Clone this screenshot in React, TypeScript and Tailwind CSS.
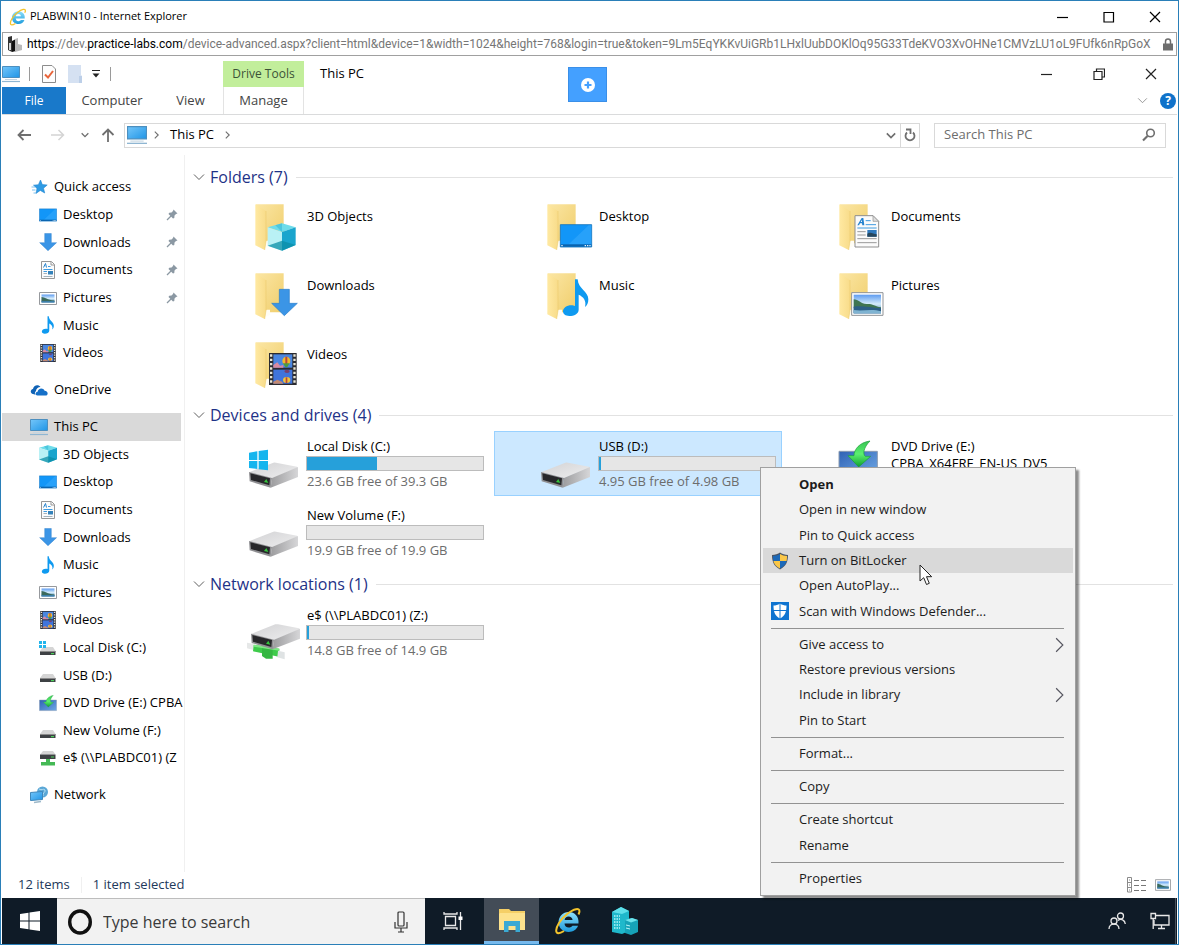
import React from 'react';
import clsx from 'clsx';

interface IconProps {
  className?: string;
}

/* Shared gradients, referenced by every drawing on the page */
const Gradients = () => (
  <svg width="0" height="0" className="absolute" aria-hidden="true">
    <defs>
      <linearGradient id="folderBack" x1="0" y1="0" x2="1" y2="1">
        <stop offset="0" stopColor="#fbe6a4" />
        <stop offset="1" stopColor="#f0ce6c" />
      </linearGradient>
      <linearGradient id="folderFlap" x1="0" y1="0" x2="1" y2="0">
        <stop offset="0" stopColor="#ffe9a2" />
        <stop offset="1" stopColor="#f8dc8a" />
      </linearGradient>
      <linearGradient id="diskTop" x1="0" y1="0" x2="1" y2="1">
        <stop offset="0" stopColor="#d2d2d4" />
        <stop offset="1" stopColor="#eeeeef" />
      </linearGradient>
      <linearGradient id="diskSide" x1="0" y1="0" x2="1" y2="0">
        <stop offset="0" stopColor="#9c9c9e" />
        <stop offset="1" stopColor="#d6d6d8" />
      </linearGradient>
      <linearGradient id="screen" x1="0" y1="0" x2="1" y2="1">
        <stop offset="0" stopColor="#74c6fa" />
        <stop offset="1" stopColor="#1f95e6" />
      </linearGradient>
      <linearGradient id="dvd" x1="0" y1="0" x2="1" y2="1">
        <stop offset="0" stopColor="#2f62b4" />
        <stop offset="1" stopColor="#6ea8e6" />
      </linearGradient>
      <linearGradient id="sky" x1="0" y1="0" x2="0" y2="1">
        <stop offset="0" stopColor="#5d9bf0" />
        <stop offset="0.5" stopColor="#d5ecfb" />
        <stop offset="1" stopColor="#3a7bb0" />
      </linearGradient>
      <linearGradient id="greenArrow" x1="0" y1="0" x2="0" y2="1">
        <stop offset="0" stopColor="#35c552" />
        <stop offset="0.5" stopColor="#5cf070" />
        <stop offset="1" stopColor="#0f9f2f" />
      </linearGradient>
      <linearGradient id="ie" x1="0" y1="0" x2="0" y2="1">
        <stop offset="0" stopColor="#8fe0fb" />
        <stop offset="1" stopColor="#1d9bdc" />
      </linearGradient>
    </defs>
  </svg>
);

/* Shapes share one 180 x 195 tile canvas */
const Folder = () => (
  <g>
    <path d="M42 34H125V151H42Z" fill="url(#folderBack)" />
    <path d="M66 152L74 143H84V158L70 166Z" fill="#fffdf5" />
    <path d="M40 34L72 54V146L68 171L40 157Z" fill="url(#folderFlap)" />
    <path d="M72 54V146L68 171" fill="none" stroke="#e8c664" strokeWidth="1.5" />
  </g>
);

const Cube = () => (
  <g>
    <path d="M120 91L161 103L120 117L77 103Z" fill="#6edcea" />
    <path d="M77 103L120 117V173L77 158Z" fill="#b9f1f5" />
    <path d="M120 117L161 103V156L120 173Z" fill="#1aa5cd" />
    <path d="M77 158L120 143L161 156L120 173Z" fill="#0b8da5" fillOpacity="0.75" />
    <path d="M100 97L120 117V91Z" fill="#37b9d6" fillOpacity="0.6" />
  </g>
);

const DownArrow = () => (
  <path
    d="M112 82H142V124H166L127 161L89 124H112Z"
    fill="#3b95e6"
    stroke="#2b7fcc"
    strokeWidth="2"
  />
);

const Film = () => (
  <g>
    <path d="M81 66H164V162H81Z" fill="#2b2b30" />
    <path d="M94 70H151V110H94Z" fill="#4a86e0" />
    <path d="M94 116H151V158H94Z" fill="#3f74dc" />
    <path d="M94 102L106 94L114 104L124 102V110H94Z" fill="#d98aa0" />
    <path d="M94 152L106 146L120 152L124 158H94Z" fill="#c48a72" />
    <ellipse cx="133" cy="90" rx="12" ry="13" fill="#f0b92c" />
    <path d="M130 77H136V103H130Z" fill="#b8453a" />
    <path d="M123 97H143L136 108H130Z" fill="#4b9c40" />
    <ellipse cx="135" cy="121" rx="8" ry="5" fill="#77406e" />
    <ellipse cx="134" cy="147" rx="11" ry="9" fill="#eec441" />
    <path d="M131 139H136V156H131Z" fill="#b8453a" />
    <path
      d="M87.500 70V160M157.500 70V160"
      stroke="#e9e6d6"
      strokeWidth="7"
      strokeDasharray="7 6"
    />
  </g>
);

const DesktopShape = () => (
  <g>
    <path d="M79 95H173V162H79Z" fill="#1296f8" stroke="#1873b9" strokeWidth="2.500" />
    <path d="M104 154L164 97H172V154Z" fill="#35a8fb" fillOpacity="0.6" />
    <path d="M80 154H172V161H80Z" fill="#0b63ad" />
    <path d="M82 156H86V160H82ZM152 156H156V160H152ZM159 156H163V160H159ZM166 156H170V160H166Z" fill="#e8f5ff" />
  </g>
);

const Note = () => (
  <path
    d="M123 52H131C133 82 163 88 163 112C163 124 159 131 153 135C158 116 148 104 134 98V143C134 155 120 162 106 162C94 162 87 156 87 148C87 138 98 130 112 130C117 130 120 131 123 132Z"
    fill="#0f9af0"
  />
);

const DocumentShape = () => (
  <g>
    <path d="M87 68H141L158 85V162H87Z" fill="#fbfbfb" stroke="#8f8f8f" strokeWidth="3" />
    <path d="M141 68V85H158Z" fill="#dedede" stroke="#8f8f8f" strokeWidth="2" />
    <path d="M94 97L107 75H112L115 97H109L108 91H102L99 97ZM104 87H108V81Z" fill="#2583cf" />
    <path d="M119 83H134M119 95H150M94 105H152" stroke="#3f9be0" strokeWidth="3" />
    <path d="M94 116H119M94 126H119M94 137H152M94 149H152" stroke="#9a9a9a" strokeWidth="3" />
    <path d="M124 111H152V131H124Z" fill="#2f79bd" />
    <path d="M124 122C134 115 142 124 152 124V131H124Z" fill="#27465c" />
  </g>
);

const PictureShape = () => (
  <g>
    <path d="M77 92H171V160H77Z" fill="#ffffff" stroke="#8f9296" strokeWidth="3" />
    <path d="M83 98H165V154H83Z" fill="url(#sky)" />
    <path d="M83 112C98 112 104 126 122 126C136 124 146 132 165 136V139H83Z" fill="#3f7551" />
    <path d="M83 134C110 130 135 138 165 138V154H83Z" fill="#2c5f86" />
    <path d="M83 144C110 148 140 140 165 148V154H83Z" fill="#7fb3d1" />
  </g>
);

const SmallPicture = () => (
  <g>
    <path d="M0.500 3.500H17.500V15.500H0.500Z" fill="#fff" stroke="#96999d" />
    <path d="M2.500 5.500H15.500V13.500H2.500Z" fill="url(#sky)" />
    <path d="M2.500 8C6 8 8 11 15.500 11.500V12.500H2.500Z" fill="#3b6a5c" />
    <path d="M2.500 12H15.500V13.500H2.500Z" fill="#3d7fa8" />
  </g>
);

const SmallDocument = () => (
  <g>
    <path d="M2.500 0.500H12.500L15.500 3.500V17.500H2.500Z" fill="#fcfcfc" stroke="#979797" />
    <path d="M12 1V4H15.500" fill="none" stroke="#979797" />
    <path d="M4.500 6.500L6.500 2.500L7.500 6.500" fill="none" stroke="#2583cf" />
    <path d="M9 5.500H11.500M4.500 8.500H13.500M4.500 10.500H8" stroke="#3f9be0" />
    <path d="M4.500 12.500H8M4.500 15.500H13.500" stroke="#a5b3bd" />
    <path d="M9 10H14V13.500H9Z" fill="#3482ba" />
  </g>
);

const Disk = () => (
  <g>
    <path d="M21 124L94 95Q98 94 102 95L165 107Q168 109 165 111L90 142Z" fill="url(#diskTop)" />
    <path d="M90 141L168 108V138L86 170Z" fill="url(#diskSide)" />
    <path d="M21 123L90 141L86 170L23 151Z" fill="#8f8f92" />
    <path d="M25 127L84 142L82 163L27 147Z" fill="#27272a" />
    <path d="M66 153L73 144L79 156Z" fill="#35c33c" />
  </g>
);

const WindowsFlag = () => (
  <path
    d="M21 65L46 61V87H21ZM50 60L78 56V87H50ZM21 90H46V114L21 111ZM50 90H78V118L50 115Z"
    fill="#16b5ee"
  />
);

const Dvd = () => (
  <g>
    <path d="M39 61H154V132H39Z" fill="url(#dvd)" stroke="#8b9bb0" strokeWidth="3" />
    <path d="M132 30C112 50 110 70 118 76H134L98 108L66 74H84C84 56 100 34 132 30Z" fill="url(#greenArrow)" stroke="#1d9c3a" strokeWidth="2" />
  </g>
);

const Cable = () => (
  <g>
    <path d="M15 128L34 131V150L15 145Z" fill="#e6e8e8" />
    <path d="M35 134L112 146L110 170L33 154Z" fill="#3ecb4b" />
    <path d="M60 140L92 146V176H72L60 168Z" fill="#35b742" />
    <path d="M35 134L112 146V152L35 140Z" fill="#7fe886" />
    <path d="M108 152L128 157V178L106 172Z" fill="#dfe3e4" />
  </g>
);

const TILE_ART: Record<string, React.ReactNode> = {
  cube: <><Folder /><Cube /></>,
  desktop: <><Folder /><DesktopShape /></>,
  documents: <><Folder /><DocumentShape /></>,
  downloads: <><Folder /><DownArrow /></>,
  music: <><Folder /><Note /></>,
  pictures: <><Folder /><PictureShape /></>,
  videos: <><Folder /><Film /></>,
  system: <><Disk /><WindowsFlag /></>,
  disk: <Disk />,
  dvd: <Dvd />,
  share: <><Cable /><g transform="translate(6 -22)"><Disk /></g></>,
};

const TileIcon = ({ art }: { art: string }) => (
  <svg viewBox="0 0 180 195" className="h-[65px] w-[60px] shrink-0" aria-hidden="true">
    {TILE_ART[art]}
  </svg>
);

const Monitor = ({ className }: IconProps) => (
  <svg viewBox="0 0 18 18" className={className} aria-hidden="true">
    <path d="M0.500 1.500H17.500V12.500H0.500Z" fill="url(#screen)" stroke="#4c8fbf" />
    <path d="M3 14.500H15" stroke="#c5d6e2" />
    <path d="M0 16.500H18" stroke="#8fb6d2" strokeWidth="1.200" />
  </svg>
);

const SmallDisk = () => (
  <g>
    <path d="M4 8H14L16.500 12H1Z" fill="#d5d5d5" />
    <path d="M1 12H16.500V16H1Z" fill="#3e4144" />
    <path d="M1 12H16.500V13H1Z" fill="#8b8b8b" />
    <path d="M12 14H15V15.200H12Z" fill="#4bd05a" />
  </g>
);

const NAV_ART: Record<string, { box: string; art: React.ReactNode }> = {
  star: {
    box: '0 0 18 18',
    art: (
      <>
        <path d="M10.500 2L12.300 6.600L17.200 7L13.500 10.200L14.700 15L10.300 12.400L6 15.400L7 10.400L3.500 7.200L8.400 6.700Z" fill="#2f9be4" stroke="#2287d2" strokeWidth="0.600" />
        <path d="M1.500 9H5M2 12H5.500M3.500 15H6" stroke="#7dc0ee" />
      </>
    ),
  },
  cloud: {
    box: '0 0 18 18',
    art: (
      <>
        <path d="M3 13C0 12.500 0 8.500 3 8C3.500 4 8.500 3 10.500 6C8 6 6 8 6 10C4.500 11 4.600 13 5.600 13.800Z" fill="#0f62b5" />
        <path d="M7.500 14.600C4.800 14.500 5 11 7.600 10.800C8 7 13.200 6 14.600 9.800C18.500 10 18.500 14.600 15.500 14.600Z" fill="#1570c8" />
      </>
    ),
  },
  network: {
    box: '0 0 18 18',
    art: (
      <>
        <circle cx="12.500" cy="6" r="5.500" fill="#5aa7d6" />
        <path d="M9 3C12 5 13 2 15 4C16 6 12 7 13 10" stroke="#b7dff2" fill="none" />
        <path d="M0.500 6.500L12.500 5.500V13.500L0.500 14.500Z" fill="url(#screen)" stroke="#3f87ba" />
        <path d="M4 16.500L11 15.500" stroke="#9db8c9" strokeWidth="1.500" />
      </>
    ),
  },
  cube: { box: '77 91 84 82', art: <Cube /> },
  desktop: { box: '77 93 98 71', art: <DesktopShape /> },
  downloads: { box: '86 80 82 82', art: <DownArrow /> },
  documents: { box: '0 0 18 18', art: <SmallDocument /> },
  pictures: { box: '0 0 18 18', art: <SmallPicture /> },
  music: { box: '87 50 78 114', art: <Note /> },
  videos: { box: '81 66 83 96', art: <Film /> },
  system: {
    box: '0 0 18 18',
    art: (
      <>
        <SmallDisk />
        <path d="M0 2H3V5H0ZM4 2H7V5H4ZM0 6H3V9H0ZM4 6H7V9H4Z" fill="#22b5ec" />
      </>
    ),
  },
  disk: { box: '0 0 18 18', art: <SmallDisk /> },
  dvd: { box: '36 28 121 106', art: <Dvd /> },
  share: {
    box: '0 0 18 18',
    art: (
      <>
        <path d="M4 2H14L16.500 5.500H1Z" fill="#d5d5d5" />
        <path d="M1 5.500H16.500V10H1Z" fill="#3e4144" />
        <path d="M12 7.500H15V8.500H12Z" fill="#4bd05a" />
        <path d="M7 10H11V13H16V16.500H2V13H7Z" fill="#44b955" />
      </>
    ),
  },
};

const NavIcon = ({ icon }: { icon: string }) =>
  icon === 'pc' ? (
    <Monitor className="size-[18px] shrink-0" />
  ) : (
    <svg viewBox={NAV_ART[icon].box} className="size-[18px] shrink-0" aria-hidden="true">
      {NAV_ART[icon].art}
    </svg>
  );

const Pin = () => (
  <svg viewBox="0 0 12 12" className="size-3 shrink-0" aria-hidden="true">
    <path d="M7.500 0.500L11.500 4.500L10 5L8.500 6.500L8.300 9L7 9.500L2.500 5L3.200 3.800L5.500 3.600L7 2Z" fill="#8b98a3" />
    <path d="M5 7L1 11" stroke="#8b98a3" strokeWidth="1.300" />
  </svg>
);

const InternetExplorer = ({ className }: IconProps) => (
  <svg viewBox="0 0 28 28" className={className} aria-hidden="true">
    <path
      d="M24.500 16.500H10.500C10.700 19 12.300 20.600 14.700 20.600C16.400 20.600 17.700 19.900 18.500 18.800H24C22.600 22.700 19.200 25 14.700 25C8.800 25 4.600 21 4.600 15.200C4.600 9.400 8.900 5 14.700 5C20.800 5 25.200 9.600 24.500 16.500ZM10.600 12.900H18.600C18.300 10.800 16.800 9.500 14.600 9.500C12.400 9.500 10.900 10.800 10.600 12.900Z"
      fill="url(#ie)"
    />
    <path
      d="M24.500 7.500C26.500 3.500 25.500 1.500 22 2.200C17 3.200 9 9.500 5 16C1.500 21.700 1.200 26.200 4.500 26.300C6 26.300 8 25.300 10 24"
      fill="none"
      stroke="#f3c32c"
      strokeWidth="2"
    />
  </svg>
);

const Chevron = ({ className }: IconProps) => (
  <svg viewBox="0 0 12 8" className={className} fill="none" stroke="currentColor" aria-hidden="true">
    <path d="M1 1.500L6 6.500L11 1.500" />
  </svg>
);

const ChevronRight = ({ className }: IconProps) => (
  <svg viewBox="0 0 8 14" className={className} fill="none" stroke="currentColor" aria-hidden="true">
    <path d="M1 1L7 7L1 13" />
  </svg>
);

const WindowIcon = ({ kind }: { kind: 'min' | 'max' | 'restore' | 'close' }) => (
  <svg viewBox="0 0 12 12" className="size-3" fill="none" stroke="currentColor" strokeWidth="1.200" aria-hidden="true">
    {kind === 'min' && <path d="M0 6.500H11" />}
    {kind === 'max' && <path d="M1 1.500H10.500V11H1Z" />}
    {kind === 'restore' && <path d="M1 3.500H9V11.500H1ZM3.500 3.500V1H11.500V9H9" />}
    {kind === 'close' && <path d="M1 1L11 11M11 1L1 11" />}
  </svg>
);

const BrowserBar = () => (
  <header>
    <div className="flex h-[31px] items-center pl-2">
      <InternetExplorer className="mr-[3px] size-[18px]" />
      <h1 className="flex-1 text-[11px] text-black">PLABWIN10 - Internet Explorer</h1>
      <div className="flex gap-[34px] pr-[17px]">
        <button aria-label="Minimize browser"><WindowIcon kind="min" /></button>
        <button aria-label="Maximize browser"><WindowIcon kind="max" /></button>
        <button aria-label="Close browser"><WindowIcon kind="close" /></button>
      </div>
    </div>
    <div className="mx-px flex h-6 items-center border border-[#a0a0a0] pr-[3px] pl-1">
      <svg viewBox="0 0 16 16" className="mr-1 size-4 shrink-0" aria-hidden="true">
        <path d="M1 1L5 0V16L1 14Z" fill="#333" />
        <path d="M5 5L9 3V15L5 16Z" fill="#111" />
        <path d="M8 3L11 2V8L15 9V14L8 16Z" fill="#b9b9b9" />
        <path d="M2 7H4V14H2Z" fill="#fff" fillOpacity="0.800" />
      </svg>
      <div role="textbox" aria-label="Address" aria-readonly="true" className="min-w-0 flex-1 overflow-hidden font-['Roboto','Open_Sans',sans-serif] text-[12px] whitespace-nowrap text-[#767676]">
        <span className="text-black">https</span>://dev.<span className="text-black">practice-labs.com</span>
        /device-advanced.aspx?client=html&amp;device=1&amp;width=1024&amp;height=768&amp;login=true&amp;token=9Lm5EqYKKvUiGRb1LHxlUubDOKlOq95G33TdeKVO3XvOHNe1CMVzLU1oL9FUfk6nRpGoX
      </div>
      <svg viewBox="0 0 10 13" className="ml-1 h-[13px] w-[10px] shrink-0" aria-hidden="true">
        <path d="M0 5.500H10V12.500H0Z" fill="#6d6d6d" />
        <path d="M2.500 6V3.500C2.500 0.300 7.500 0.300 7.500 3.500V6" fill="none" stroke="#6d6d6d" strokeWidth="1.500" />
      </svg>
    </div>
  </header>
);

const Ribbon = () => (
  <div className="border-b border-[#dadbdc]">
    <div className="flex h-[31px] items-end">
      <div className="flex h-[26px] w-[221px] items-center">
        <Monitor className="size-[18px]" />
        <span className="ml-[9px] h-[14px] w-px bg-[#9a9a9a]" />
        <svg viewBox="0 0 14 18" className="ml-3 h-[18px] w-[14px]" aria-hidden="true">
          <path d="M0.500 0.500H10L13.500 4V17.500H0.500Z" fill="#fdfdfd" stroke="#8c8c8c" />
          <path d="M3 9.500L6 12.500L11 6" fill="none" stroke="#e8643a" strokeWidth="2" />
        </svg>
        <svg viewBox="0 0 14 18" className="ml-3 h-[18px] w-[14px]" aria-hidden="true">
          <path d="M0 0H13V10L14 11V18H0Z" fill="#d5e1f2" />
          <path d="M11 11H14V18H11Z" fill="#bccfe8" />
        </svg>
        <button aria-label="Customize toolbar" className="ml-[10px]">
          <svg viewBox="0 0 8 8" className="size-2" aria-hidden="true">
            <path d="M0 0.500H8" stroke="#222" />
            <path d="M0.500 3.500H7.500L4 7.500Z" fill="#222" />
          </svg>
        </button>
        <span className="ml-[10px] h-[14px] w-px bg-[#9a9a9a]" />
      </div>
      <div className="flex h-[26px] w-[81px] items-center justify-center bg-[#c2ee9b] text-[12px] text-[#3c5238]">
        Drive Tools
      </div>
      <h2 className="ml-4 flex h-[26px] flex-1 items-center text-[13px] text-black">This PC</h2>
      <div className="flex h-[26px] items-center gap-10 pr-5 text-[#222]">
        <button aria-label="Minimize"><WindowIcon kind="min" /></button>
        <button aria-label="Restore"><WindowIcon kind="restore" /></button>
        <button aria-label="Close"><WindowIcon kind="close" /></button>
      </div>
    </div>
    <div className="flex h-[27px] items-stretch text-[13px] text-[#444]">
      <button className="w-16 bg-[#1979ca] text-[12px] text-white">File</button>
      <button className="w-[92px]">Computer</button>
      <button className="w-[65px]">View</button>
      <button className="w-[81px] border-x border-[#e3e3e3]">Manage</button>
      <div className="flex flex-1 items-center justify-end gap-3 pr-px">
        <button aria-label="Expand ribbon"><Chevron className="h-[7px] w-[11px] text-[#8a8a8a]" /></button>
        <button aria-label="Help" className="flex size-4 items-center justify-center rounded-full bg-[#0f72ca] text-[12px] leading-4 font-bold text-white">
          ?
        </button>
      </div>
    </div>
  </div>
);

const AddressRow = () => (
  <div className="flex h-10 items-center pr-[11px] text-[#6f6f6f]">
    <div className="flex w-[122px] items-center pl-[15px]">
      <button aria-label="Back">
        <svg viewBox="0 0 14 12" className="h-3 w-[14px]" fill="none" stroke="currentColor" strokeWidth="1.800" aria-hidden="true">
          <path d="M14 6H1.500M6.500 1L1.500 6L6.500 11" />
        </svg>
      </button>
      <button aria-label="Forward" disabled className="ml-5 text-[#d4d4d4]">
        <svg viewBox="0 0 14 12" className="h-3 w-[14px]" fill="none" stroke="currentColor" strokeWidth="1.500" aria-hidden="true">
          <path d="M0 6H12.500M7.500 1L12.500 6L7.500 11" />
        </svg>
      </button>
      <button aria-label="Recent locations" className="ml-4">
        <Chevron className="h-[6px] w-2 stroke-2" />
      </button>
      <button aria-label="Up" className="ml-3">
        <svg viewBox="0 0 14 14" className="size-[14px]" fill="none" stroke="currentColor" strokeWidth="1.800" aria-hidden="true">
          <path d="M7 14V1.500M1.500 7L7 1.500L12.500 7" />
        </svg>
      </button>
    </div>
    <div className="flex h-[25px] flex-1 items-center border border-[#d9d9d9]">
      <Monitor className="ml-[2px] size-5" />
      <ChevronRight className="ml-[7px] h-2 w-[5px] stroke-2" />
      <button className="mx-[11px] text-[13px] text-black">This PC</button>
      <ChevronRight className="h-2 w-[5px] stroke-2" />
      <button aria-label="Previous locations" className="mr-1 ml-auto">
        <Chevron className="h-[7px] w-[10px] stroke-2" />
      </button>
      <button aria-label="Refresh" className="flex h-full w-[19px] items-center justify-center border-l border-[#d9d9d9]">
        <svg viewBox="0 0 12 14" className="h-[14px] w-3" fill="none" stroke="currentColor" strokeWidth="1.800" aria-hidden="true">
          <path d="M9 4.500A4.500 4.500 0 1 1 3 4.500" />
          <path d="M2 1.500H6.500V6" />
        </svg>
      </button>
    </div>
    <label className="ml-[14px] flex h-[25px] w-[232px] items-center border border-[#d9d9d9] px-[9px]">
      <input
        type="text"
        aria-label="Search This PC"
        placeholder="Search This PC"
        className="min-w-0 flex-1 text-[13px] outline-none placeholder:text-[#6d6d6d]"
      />
      <svg viewBox="0 0 14 14" className="size-[14px]" fill="none" stroke="currentColor" strokeWidth="1.600" aria-hidden="true">
        <circle cx="8.500" cy="5" r="3.800" />
        <path d="M5.500 8L1 12.500" strokeWidth="2.200" />
      </svg>
    </label>
  </div>
);

interface NavItem {
  label: string;
  icon: string;
  root?: boolean;
  pinned?: boolean;
  selected?: boolean;
}

const QUICK_ACCESS: NavItem[] = [
  { label: 'Quick access', icon: 'star', root: true },
  { label: 'Desktop', icon: 'desktop', pinned: true },
  { label: 'Downloads', icon: 'downloads', pinned: true },
  { label: 'Documents', icon: 'documents', pinned: true },
  { label: 'Pictures', icon: 'pictures', pinned: true },
  { label: 'Music', icon: 'music' },
  { label: 'Videos', icon: 'videos' },
];

const THIS_PC: NavItem[] = [
  { label: 'This PC', icon: 'pc', root: true, selected: true },
  { label: '3D Objects', icon: 'cube' },
  { label: 'Desktop', icon: 'desktop' },
  { label: 'Documents', icon: 'documents' },
  { label: 'Downloads', icon: 'downloads' },
  { label: 'Music', icon: 'music' },
  { label: 'Pictures', icon: 'pictures' },
  { label: 'Videos', icon: 'videos' },
  { label: 'Local Disk (C:)', icon: 'system' },
  { label: 'USB (D:)', icon: 'disk' },
  { label: 'DVD Drive (E:) CPBA', icon: 'dvd' },
  { label: 'New Volume (F:)', icon: 'disk' },
  { label: 'e$ (\\\\PLABDC01) (Z', icon: 'share' },
];

const NavRow = ({ item }: { item: NavItem }) => (
  <li className="min-h-0">
    <button
      className={clsx(
        'flex h-full w-full items-center gap-[6px] text-left whitespace-nowrap',
        item.root ? 'pl-7' : 'pl-[37px]',
        item.selected && 'bg-[#d9d9d9]'
      )}
    >
      <NavIcon icon={item.icon} />
      <span className="min-w-0 flex-1">{item.label}</span>
      {item.pinned && <span className="mr-[3px]"><Pin /></span>}
    </button>
  </li>
);

const Sidebar = () => (
  <nav aria-label="Navigation pane" className="flex w-[183px] shrink-0 flex-col gap-[9px] border-r border-[#f0f0f0] pt-[18px] pr-[3px] text-[13px] text-black">
    <ul className="grid h-[194px] auto-rows-fr grid-cols-1">
      {QUICK_ACCESS.map(item => <NavRow key={item.label} item={item} />)}
    </ul>
    <ul className="grid h-7 grid-cols-1">
      <NavRow item={{ label: 'OneDrive', icon: 'cloud', root: true }} />
    </ul>
    <ul className="grid h-[359px] auto-rows-fr grid-cols-1">
      {THIS_PC.map(item => <NavRow key={item.label} item={item} />)}
    </ul>
    <ul className="grid h-7 grid-cols-1">
      <NavRow item={{ label: 'Network', icon: 'network', root: true }} />
    </ul>
  </nav>
);

const FOLDERS = [
  { label: '3D Objects', art: 'cube' },
  { label: 'Desktop', art: 'desktop' },
  { label: 'Documents', art: 'documents' },
  { label: 'Downloads', art: 'downloads' },
  { label: 'Music', art: 'music' },
  { label: 'Pictures', art: 'pictures' },
  { label: 'Videos', art: 'videos' },
];

interface Drive {
  label: string;
  art: string;
  used?: number;
  free?: string;
  volume?: string;
  selected?: boolean;
}

const DRIVES: Drive[] = [
  { label: 'Local Disk (C:)', art: 'system', used: 39.5, free: '23.6 GB free of 39.3 GB' },
  { label: 'USB (D:)', art: 'disk', used: 1, free: '4.95 GB free of 4.98 GB', selected: true },
  { label: 'DVD Drive (E:)', art: 'dvd', volume: 'CPBA_X64FRE_EN-US_DV5' },
  { label: 'New Volume (F:)', art: 'disk', used: 0, free: '19.9 GB free of 19.9 GB' },
];

const SHARES: Drive[] = [
  { label: 'e$ (\\\\PLABDC01) (Z:)', art: 'share', used: 1, free: '14.8 GB free of 14.9 GB' },
];

const Section = ({ title, children }: { title: string; children: React.ReactNode }) => (
  <section>
    <div className="flex h-8 items-center">
      <button className="flex items-center gap-[5px] text-[16px] text-[#1e3287]">
        <Chevron className="h-2 w-3 text-[#5f5f5f]" />
        {title}
      </button>
      <span className="ml-2 h-px flex-1 bg-[#e2e2e2]" />
    </div>
    <ul className="ml-[9px] grid grid-cols-[repeat(auto-fill,288px)] gap-1">{children}</ul>
  </section>
);

const DriveTile = ({ drive }: { drive: Drive }) => (
  <li
    className={clsx(
      'flex h-[65px] pl-10',
      drive.selected && 'bg-[#cce8ff] outline-1 -outline-offset-1 outline-[#99d1ff]'
    )}
  >
    <TileIcon art={drive.art} />
    <div className="ml-1 w-[178px] pt-[7px] text-[13px] leading-[17px]">
      <div className="pl-px text-black">{drive.label}</div>
      {drive.volume && <div className="pl-px text-black">{drive.volume}</div>}
      {drive.free && (
        <>
          <div className="mt-px h-[15px] border border-[#bcbcbc] bg-[#e6e6e6]">
            <div className="h-full bg-[#26a0da]" style={{ width: `${drive.used}%` }} />
          </div>
          <div className="mt-[2px] pl-px text-[#6d6d6d]">{drive.free}</div>
        </>
      )}
    </div>
  </li>
);

const FileList = () => (
  <main className="flex min-w-0 flex-1 flex-col gap-[3px] pt-[6px] pr-1 pl-2">
    <Section title="Folders (7)">
      {FOLDERS.map(folder => (
        <li key={folder.label} className="flex h-[65px] pl-10">
          <TileIcon art={folder.art} />
          <span className="pt-[14px] pl-[5px] text-[13px] leading-[18px] text-black">{folder.label}</span>
        </li>
      ))}
    </Section>
    <Section title="Devices and drives (4)">
      {DRIVES.map(drive => <DriveTile key={drive.label} drive={drive} />)}
    </Section>
    <Section title="Network locations (1)">
      {SHARES.map(drive => <DriveTile key={drive.label} drive={drive} />)}
    </Section>
  </main>
);

const StatusBar = () => (
  <footer className="flex h-[26px] items-center pr-[6px] pl-4 text-[13px] text-[#1e395b]">
    <span>12 items</span>
    <span className="mx-[11px] h-4 w-px bg-[#f0f0f0]" />
    <span className="flex-1">1 item selected</span>
    <button aria-label="Details view">
      <svg viewBox="0 0 20 16" className="h-4 w-5" fill="none" stroke="#8a8a8a" aria-hidden="true">
        <path d="M0.500 0.500H4.500V15H0.500ZM0.500 5.500H4.500M0.500 10.500H4.500M2 3H3M2 8H3M2 13H3" />
        <path d="M7 3.500H12M14 3.500H19M7 8.500H12M14 8.500H19M7 13.500H12M14 13.500H19" stroke="#777" />
      </svg>
    </button>
    <button aria-label="Large icons view" className="ml-2">
      <svg viewBox="0 3 18 13" className="h-3 w-4" aria-hidden="true"><SmallPicture /></svg>
    </button>
  </footer>
);

interface MenuItem {
  label: string;
  icon?: 'uac' | 'defender';
  bold?: boolean;
  active?: boolean;
  submenu?: boolean;
}

const MENU: { height: string; items: MenuItem[] }[] = [
  {
    height: 'h-[152px]',
    items: [
      { label: 'Open', bold: true },
      { label: 'Open in new window' },
      { label: 'Pin to Quick access' },
      { label: 'Turn on BitLocker', icon: 'uac', active: true },
      { label: 'Open AutoPlay...' },
      { label: 'Scan with Windows Defender...', icon: 'defender' },
    ],
  },
  {
    height: 'h-[101px]',
    items: [
      { label: 'Give access to', submenu: true },
      { label: 'Restore previous versions' },
      { label: 'Include in library', submenu: true },
      { label: 'Pin to Start' },
    ],
  },
  { height: 'h-[25px]', items: [{ label: 'Format...' }] },
  { height: 'h-[25px]', items: [{ label: 'Copy' }] },
  { height: 'h-[51px]', items: [{ label: 'Create shortcut' }, { label: 'Rename' }] },
  { height: 'h-[25px]', items: [{ label: 'Properties' }] },
];

const MenuIcon = ({ icon }: { icon?: 'uac' | 'defender' }) => (
  <svg viewBox="0 0 18 18" className="size-[18px] shrink-0" aria-hidden="true">
    {icon === 'uac' && (
      <>
        <path d="M9 0.500C11 2 14 3 17 3C17 9 15.500 14 9 17.500C2.500 14 1 9 1 3C4 3 7 2 9 0.500Z" fill="#4b5563" />
        <path d="M9 2V9H2.400C2.100 7.500 2 6 2 4C4.500 4 7 3.300 9 2Z" fill="#1c69b8" />
        <path d="M9 2V9H15.600C15.900 7.500 16 6 16 4C13.500 4 11 3.300 9 2Z" fill="#fac748" />
        <path d="M9 16.400V9H2.400C3.200 12.300 5.200 14.500 9 16.400Z" fill="#fac748" />
        <path d="M9 16.400V9H15.600C14.800 12.300 12.800 14.500 9 16.400Z" fill="#1c69b8" />
      </>
    )}
    {icon === 'defender' && (
      <>
        <path d="M0 0H18V18H0Z" fill="#0f74d0" />
        <path d="M9 1.500C11 3 13.500 3.500 15.500 3.500C15.500 10 14 14 9 16.500C4 14 2.500 10 2.500 3.500C4.500 3.500 7 3 9 1.500Z" fill="#fff" />
        <path d="M9 1V17M2 8.500H16" stroke="#0f74d0" />
      </>
    )}
  </svg>
);

const ContextMenu = () => (
  <div role="menu" className="absolute top-[466px] left-[759px] w-[316px] border border-[#a0a0a0] bg-[#f2f2f2] px-[2px] py-1 text-[13px] text-[#1c1c1c] shadow-[3px_3px_2px_rgba(0,0,0,0.45)]">
    {MENU.map((group, index) => (
      <React.Fragment key={group.items[0].label}>
        {index > 0 && <div role="separator" className="mt-1 mr-[9px] mb-[3px] ml-2 h-px bg-[#929292]" />}
        <div className={clsx('grid auto-rows-fr', group.height)}>
          {group.items.map(item => (
            <button
              key={item.label}
              role="menuitem"
              className={clsx(
                'flex min-h-0 items-center pr-[9px] pl-2 text-left',
                item.bold && 'font-bold',
                item.active && 'bg-[#d9d9d9]'
              )}
            >
              <MenuIcon icon={item.icon} />
              <span className="ml-[10px] flex-1">{item.label}</span>
              {item.submenu && <ChevronRight className="h-4 w-[9px] text-[#55555f]" />}
            </button>
          ))}
        </div>
      </React.Fragment>
    ))}
  </div>
);

const Cursor = () => (
  <svg viewBox="0 0 14 22" className="absolute top-[563px] left-[918px] h-[22px] w-[14px]" aria-hidden="true">
    <path d="M1 1V17L4.700 13.700L7.500 20.500L10.300 19.300L7.500 12.700H12.700Z" fill="#fff" stroke="#222" />
  </svg>
);

const Taskbar = () => (
  <div className="flex h-[46px] items-stretch bg-[#0f1b27] text-white">
    <button aria-label="Start" className="flex w-[55px] items-center justify-center">
      <svg viewBox="0 0 20 20" className="size-5" fill="#fff" aria-hidden="true">
        <path d="M0 3L8.500 1.800V9.500H0ZM9.500 1.600L20 0V9.500H9.500ZM0 10.500H8.500V18.200L0 17ZM9.500 10.500H20V20L9.500 18.400Z" />
      </svg>
    </button>
    <label className="flex w-[368px] items-center border-t border-[#bdbdbd] bg-[#f2f2f2] px-[11px] text-[#222]">
      <svg viewBox="0 0 24 26" className="h-[26px] w-6" aria-hidden="true">
        <ellipse cx="12" cy="13" rx="10.300" ry="11" fill="none" stroke="#111" strokeWidth="3.400" />
      </svg>
      <input
        type="text"
        aria-label="Type here to search"
        placeholder="Type here to search"
        className="ml-[11px] min-w-0 flex-1 text-[16px] outline-none placeholder:text-[#3a3a3a]"
      />
      <svg viewBox="0 0 14 22" className="mr-[6px] h-[22px] w-[14px]" fill="none" stroke="#333" strokeWidth="1.200" aria-hidden="true">
        <rect x="4" y="1" width="6" height="14" rx="1" />
        <path d="M1 11V17H13V11M7 17V21M4 21H10" />
      </svg>
    </label>
    <button aria-label="Task view" className="flex w-[55px] items-center justify-center">
      <svg viewBox="0 0 20 20" className="size-5" fill="none" stroke="#e8e8e8" strokeWidth="1.300" aria-hidden="true">
        <path d="M2.500 5.500H12.500V14.500H2.500ZM1 1V3H14V1M1 19V17H14V19M17.500 1V19" />
        <path d="M15.500 5.500H19.500V9H15.500Z" fill="#fff" stroke="none" />
      </svg>
    </button>
    <button aria-label="File Explorer" className="ml-1 flex w-[55px] items-center justify-center border-b-3 border-[#76b9ed] bg-[#434c57]">
      <svg viewBox="0 0 26 24" className="h-6 w-[26px]" aria-hidden="true">
        <path d="M0 1H10L12 3H26V22H0Z" fill="#f5cf66" />
        <path d="M1 5H26V22H0V6Z" fill="#fde28d" />
        <path d="M5 24V13H21V24H16.500V18H9.500V24Z" fill="#3aa9d4" />
      </svg>
    </button>
    <button aria-label="Internet Explorer" className="flex w-[57px] items-center justify-center">
      <InternetExplorer className="size-7" />
    </button>
    <button aria-label="Server Manager" className="flex w-[57px] items-center justify-center">
      <svg viewBox="0 0 26 28" className="h-7 w-[26px]" aria-hidden="true">
        <path d="M0 5L9 0L17 4V24L10 27L0 25Z" fill="#1fb8cb" />
        <path d="M0 5L9 0L17 4L10 7Z" fill="#5fe0ea" />
        <path d="M2 9H8M2 12H8M2 15H8M2 18H8M2 21H8" stroke="#b5f4f8" strokeWidth="1.300" strokeDasharray="1.500 1" />
        <path d="M13 13L20 11L26 13V25L19 28L13 26Z" fill="#16a3b8" />
        <path d="M13 13L20 11L26 13L19 15.500Z" fill="#6ce3ec" />
        <path d="M14 18L18 19M14 21L18 22" stroke="#b5f4f8" />
      </svg>
    </button>
    <div className="flex flex-1 items-center justify-end">
      <button aria-label="People" className="mr-6">
        <svg viewBox="0 0 18 18" className="size-[18px]" fill="none" stroke="#e8e8e8" strokeWidth="1.300" aria-hidden="true">
          <circle cx="12.500" cy="4" r="3" />
          <circle cx="6" cy="9" r="3" />
          <path d="M1 17C1 10.500 11 10.500 11 17M10 8.500C13 6 17 8 17.300 12" />
        </svg>
      </button>
      <button aria-label="Network status">
        <svg viewBox="0 0 20 18" className="h-[18px] w-5" fill="none" stroke="#e8e8e8" strokeWidth="1.300" aria-hidden="true">
          <path d="M6 3.500H19V13H4V8M8 16.500H15M11.500 13V16.500" />
          <path d="M1 1.500H5.500V6.500H1ZM3.200 6.500V17" />
        </svg>
      </button>
      <span className="mr-px ml-[5px] h-full w-px bg-[#4a535d]" />
    </div>
  </div>
);

const App: React.FC = () => (
  <div className="relative flex min-h-screen flex-col border border-[#2a7fb8] bg-white font-['Open_Sans','Noto_Sans',sans-serif]">
    <Gradients />
    <BrowserBar />
    <div className="mr-px ml-px flex flex-1 flex-col">
      <Ribbon />
      <AddressRow />
      <div className="flex flex-1">
        <Sidebar />
        <FileList />
      </div>
      <StatusBar />
      <Taskbar />
    </div>
    <button aria-label="Show connection tools" className="absolute top-[66px] left-[567px] flex h-[35px] w-[39px] items-center justify-center border border-[#3a8fe8] bg-[#44a0ff]">
      <svg viewBox="0 0 14 14" className="size-[14px]" aria-hidden="true">
        <circle cx="7" cy="7" r="7" fill="#fff" />
        <path d="M7 3.500V10.500M3.500 7H10.500" stroke="#44a0ff" strokeWidth="2.200" />
      </svg>
    </button>
    <ContextMenu />
    <Cursor />
  </div>
);

export default App;
